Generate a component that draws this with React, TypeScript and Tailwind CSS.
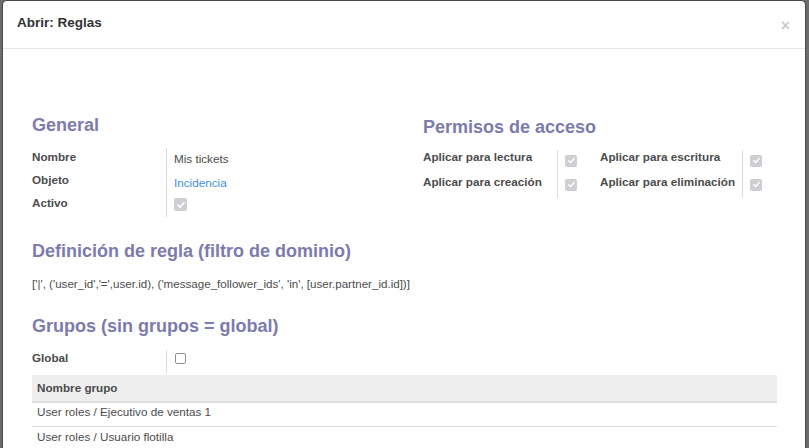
import React from "react";

const font = { fontFamily: '"Liberation Sans", Arial, sans-serif' };

function CheckOn({ size = 12 }: { size?: number }) {
  return (
    <span
      className="inline-flex items-center justify-center rounded-[2px] bg-[#cfcfd3]"
      style={{ width: size, height: size }}
    >
      <svg width={size - 3} height={size - 3} viewBox="0 0 10 10" fill="none">
        <path d="M2 5.2 L4.1 7.2 L8 2.8" stroke="#ffffff" strokeWidth="1.6" strokeLinecap="round" strokeLinejoin="round" />
      </svg>
    </span>
  );
}

function CheckOff() {
  return <span className="inline-block h-[11px] w-[11px] rounded-[2px] border border-[#8f8f8f] bg-white" />;
}

export default function App() {
  return (
    <div className="h-[448px] w-[809px] overflow-hidden bg-[#6d6d6d] pl-[2px] pr-[3px]" style={font}>
      <div className="h-full w-full overflow-hidden rounded-t-[5px] border-x border-t border-[#4a4a4a] bg-white text-[#4c4c4c]">
        {/* header */}
        <div className="relative h-[48px] border-b border-[#e5e5e5] pl-[14px] pt-[14px]">
          <div className="text-[13.5px] font-bold leading-[16px] text-[#333]">Abrir: Reglas</div>
          <div className="absolute right-[15px] top-[17px] text-[16px] font-bold leading-[16px] text-[#000] opacity-20">×</div>
        </div>

        {/* body */}
        <div className="pl-[29px] pr-[28px] pt-[65px]">
          <div className="flex">
            {/* left */}
            <div className="w-[391px]">
              <div className="text-[18px] font-bold leading-[22px] text-[#7c7bad]">General</div>
              <div className="mt-[12px] flex">
                <div className="w-[134px] text-[11.7px] font-bold leading-[14px]">
                  <div className="h-[23px] pt-[2px]">Nombre</div>
                  <div className="h-[23px] pt-[2px]">Objeto</div>
                  <div className="h-[23px] pt-[2px]">Activo</div>
                </div>
                <div className="border-l border-[#dcdcdc] pl-[7px] text-[11.7px] leading-[14px]">
                  <div className="h-[23px] pt-[4px]">Mis tickets</div>
                  <div className="h-[23px] pt-[5px] text-[#3f8fd8]">Incidencia</div>
                  <div className="flex h-[23px] items-start pt-[4px]">
                    <CheckOn size={13} />
                  </div>
                </div>
              </div>
            </div>
            {/* right */}
            <div className="flex-1">
              <div className="mt-[2px] text-[18px] font-bold leading-[22px] text-[#7c7bad]">Permisos de acceso</div>
              <div className="mt-[12px] flex text-[11.7px] leading-[14px]">
                <div className="w-[134px] font-bold">
                  <div className="h-[24px]">Aplicar para lectura</div>
                  <div className="h-[24px] pt-[1px]">Aplicar para creación</div>
                </div>
                <div className="w-[43px] border-l border-[#dcdcdc] pl-[7px]">
                  <div className="h-[24px] pt-[4px]">
                    <CheckOn size={12} />
                  </div>
                  <div className="h-[24px] pt-[4px]">
                    <CheckOn size={12} />
                  </div>
                </div>
                <div className="w-[142px] font-bold">
                  <div className="h-[24px]">Aplicar para escritura</div>
                  <div className="h-[24px] pt-[1px]">Aplicar para eliminación</div>
                </div>
                <div className="border-l border-[#dcdcdc] pl-[7px]">
                  <div className="h-[24px] pt-[4px]">
                    <CheckOn size={12} />
                  </div>
                  <div className="h-[24px] pt-[4px]">
                    <CheckOn size={12} />
                  </div>
                </div>
              </div>
            </div>
          </div>

          <div className="mt-[23px] text-[18px] font-bold leading-[22px] text-[#7c7bad]">
            Definición de regla (filtro de dominio)
          </div>
          <div className="mt-[15px] text-[11.6px] leading-[14px]">
            ['|', ('user_id','=',user.id), ('message_follower_ids', 'in', [user.partner_id.id])]
          </div>

          <div className="mt-[24px] text-[18px] font-bold leading-[22px] text-[#7c7bad]">
            Grupos (sin grupos = global)
          </div>
          <div className="mt-[13px] flex h-[24px] text-[11.7px] leading-[14px]">
            <div className="w-[134px] pt-[1px] font-bold">Global</div>
            <div className="border-l border-[#dcdcdc] pl-[8px] pt-[3px]">
              <CheckOff />
            </div>
          </div>

          <div className="mt-[1px] text-[11.7px] leading-[14px]">
            <div className="flex h-[28px] items-center border-b-2 border-[#dddddd] bg-[#eeeeee] pl-[5px] font-bold">
              Nombre grupo
            </div>
            <div className="h-[24px] border-b border-[#dddddd] pl-[5px] pt-[2px]">User roles / Ejecutivo de ventas 1</div>
            <div className="h-[24px] pl-[5px] pt-[3px]">User roles / Usuario flotilla</div>
          </div>
        </div>
      </div>
    </div>
  );
}
